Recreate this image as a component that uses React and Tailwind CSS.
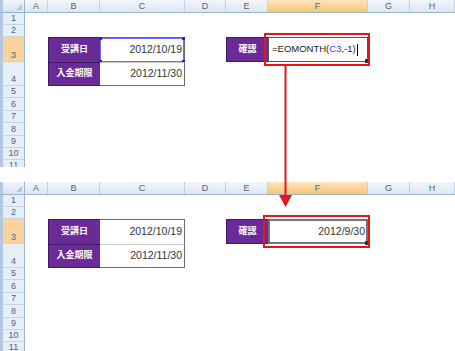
import React from 'react';

const columns = [
  { key: 'A', w: 'w-[23px]' },
  { key: 'B', w: 'w-[52px]' },
  { key: 'C', w: 'w-[85px]' },
  { key: 'D', w: 'w-[41px]' },
  { key: 'E', w: 'w-[42px]' },
  { key: 'F', w: 'w-[100px]' },
  { key: 'G', w: 'w-[42px]' },
  { key: 'H', w: 'w-[45px]' },
];

const rows = [
  { n: 1, h: 'h-[12px]' },
  { n: 2, h: 'h-[12px]' },
  { n: 3, h: 'h-[25px]' },
  { n: 4, h: 'h-[24px]' },
  { n: 5, h: 'h-[12px]' },
  { n: 6, h: 'h-[13px]' },
  { n: 7, h: 'h-[12px]' },
  { n: 8, h: 'h-[13px]' },
  { n: 9, h: 'h-[12px]' },
  { n: 10, h: 'h-[12px]' },
  { n: 11, h: 'h-[12px]' },
];

function ColumnHeader() {
  return (
    <div className="flex h-[13px] border-b border-[#9db4d0]">
      <div className="relative w-[25px] border-l-[3px] border-r border-l-[#b3c7e3] border-r-[#9db4d0] bg-gradient-to-b from-[#f2f6fb] to-[#d9e3f1]">
        <svg className="absolute bottom-[2px] right-[2px]" width="6" height="6" viewBox="0 0 6 6">
          <polygon points="6,0 6,6 0,6" fill="#b5c6dc" />
        </svg>
      </div>
      {columns.map((c) => (
        <div
          key={c.key}
          className={`${c.w} flex items-center justify-center border-r border-[#c2d1e5] text-[9px] leading-none text-[#51627c] ${
            c.key === 'F'
              ? 'bg-gradient-to-b from-[#fce5bd] to-[#f7c570]'
              : 'bg-gradient-to-b from-[#f3f6fb] to-[#dce6f2]'
          }`}
        >
          {c.key}
        </div>
      ))}
    </div>
  );
}

function DateCell({ value, selected, last }) {
  return (
    <div
      className={`relative flex h-full items-center justify-end pr-[2px] text-[10.5px] text-[#333] border-r border-[#6b6b6b] ${
        last ? 'border-b border-t border-t-[#c8c8c8]' : 'border-t'
      }`}
    >
      {value}
      {selected && (
        <>
          <div className="absolute inset-0 border border-[#6b6bff]" />
          <div className="absolute -left-[1px] -top-[1px] h-[3px] w-[3px] bg-[#1c1cff]" />
          <div className="absolute -right-[1px] -top-[1px] h-[3px] w-[3px] bg-[#1c1cff]" />
          <div className="absolute -left-[1px] -bottom-[1px] h-[3px] w-[3px] bg-[#1c1cff]" />
          <div className="absolute -right-[1px] -bottom-[1px] h-[3px] w-[3px] bg-[#1c1cff]" />
        </>
      )}
    </div>
  );
}

function Label({ text, bottom }) {
  return (
    <div
      className={`flex h-full items-center justify-center bg-[#6a2b98] text-[9px] font-bold text-white border-l border-t border-[#3f1962] ${
        bottom ? 'border-b' : ''
      }`}
    >
      {text}
    </div>
  );
}

function Cell({ col, row, editing }) {
  if (row === 3) {
    if (col === 'B') return <Label text="受講日" />;
    if (col === 'C') return <DateCell value="2012/10/19" selected={editing} />;
    if (col === 'E')
      return (
        <div className="flex h-full items-center justify-center border border-r-0 border-[#3f1962] bg-[#6a2b98] text-[9px] font-bold text-white">
          確認
        </div>
      );
    if (col === 'F') {
      if (editing) {
        return (
          <div className="relative flex h-full items-center border border-[#555] pl-[3px] text-[9.5px] text-[#222]">
            <span>=EOMONTH(</span>
            <span className="text-[#3a3aff]">C3</span>
            <span>,-1)</span>
            <span className="ml-[1px] h-[12px] w-[1px] bg-black" />
            <div className="absolute -bottom-[2px] -right-[2px] h-[4px] w-[4px] bg-[#333]" />
          </div>
        );
      }
      return (
        <div className="relative flex h-full items-center justify-end border-2 border-[#747474] pr-[1px] text-[10.5px] text-[#333]">
          2012/9/30
          <div className="absolute -bottom-[3px] -right-[3px] h-[4px] w-[4px] bg-[#333]" />
        </div>
      );
    }
  }
  if (row === 4) {
    if (col === 'B') return <Label text="入金期限" bottom />;
    if (col === 'C') return <DateCell value="2012/11/30" last />;
  }
  return null;
}

function Sheet({ editing, className }) {
  return (
    <div className={`overflow-hidden bg-white ${className}`}>
      <ColumnHeader />
      {rows.map((r) => (
        <div key={r.n} className={`flex ${r.h}`}>
          <div
            className={`flex w-[25px] items-end justify-center border-l-[3px] border-r border-b border-l-[#b3c7e3] border-r-[#9db4d0] border-b-[#c6d4e7] pb-[1px] text-[9px] leading-none text-[#51627c] ${
              r.n === 3 ? 'bg-[#f9d39b]' : 'bg-[#e6eef8]'
            }`}
          >
            {r.n}
          </div>
          {columns.map((c) => (
            <div key={c.key} className={`${c.w} shrink-0`}>
              <Cell col={c.key} row={r.n} editing={editing} />
            </div>
          ))}
        </div>
      ))}
    </div>
  );
}

export default function App() {
  return (
    <div className="relative h-[351px] w-[455px] overflow-hidden bg-white font-['Liberation_Sans','Noto_Sans_CJK_JP',sans-serif]">
      <div className="flex flex-col gap-[15px]">
        <Sheet editing className="h-[167px]" />
        <Sheet className="h-[169px]" />
      </div>

      {/* red highlight boxes */}
      <div className="absolute left-[264px] top-[33px] h-[33px] w-[106px] border-2 border-[#e8141b]" />
      <div className="absolute left-[263px] top-[215px] h-[33px] w-[107px] border-2 border-[#e8141b]" />

      {/* arrow */}
      <svg className="absolute left-[278px] top-[66px]" width="16" height="142" viewBox="0 0 16 142">
        <line x1="7.5" y1="0" x2="7.5" y2="130" stroke="#e8141b" strokeWidth="2" />
        <polygon points="1,129 14,129 7.5,141" fill="#e8141b" />
      </svg>
    </div>
  );
}
